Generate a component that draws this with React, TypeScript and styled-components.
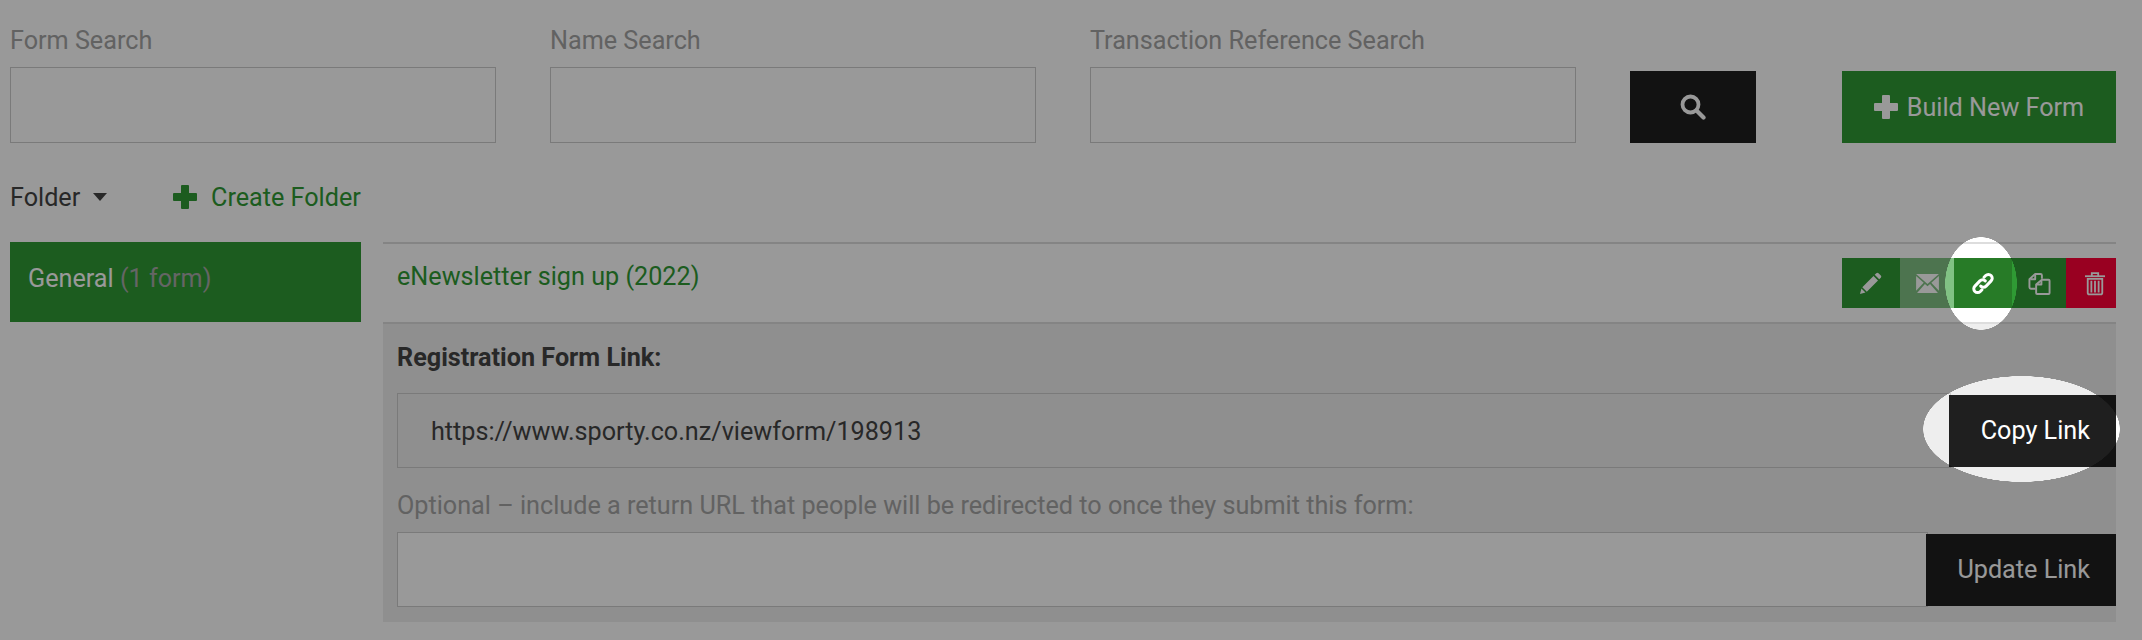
import styled, { createGlobalStyle } from 'styled-components';

const GlobalStyle = createGlobalStyle`
  html, body {
    margin: 0;
    background: #fff;
    font-family: Roboto, "Open Sans", sans-serif;
    font-size: 25.2px;
    color: #444;
  }
`;

const Page = styled.div`
  position: relative;
  width: 2142px;
  height: 640px;
  padding: 0 26px 0 10px;
  box-sizing: border-box;
  overflow: hidden;
`;

// dim layer with two elliptical holes round the highlighted controls
const Dimmer = styled.div`
  position: absolute;
  inset: 0;
  background: rgba(0, 0, 0, 0.4);
  mask-image:
    radial-gradient(ellipse 36px 46.5px at 1981px 283.5px, transparent 99%, #000 100%),
    radial-gradient(ellipse 98.5px 53px at 2021.5px 429px, transparent 99.5%, #000 100%);
  mask-composite: intersect;
`;

const SearchRow = styled.div`
  display: flex;
  align-items: flex-end;
  padding-top: 25px;
`;

const SearchField = styled.div`
  width: 486px;
  margin-right: 54px;
`;

const FieldLabel = styled.label`
  display: block;
  height: 42px;
  line-height: 31px;
  color: #a3a3a3;
`;

const TextBox = styled.div`
  height: 76px;
  box-sizing: border-box;
  border: 1px solid #ccc;
  background: #fff;
`;

const SearchButton = styled.button`
  width: 126px;
  height: 72px;
  margin: 0 86px 0 0;
  border: 0;
  padding: 0;
  background: #1f1f1f;
  color: #fff;
  display: flex;
  align-items: center;
  justify-content: center;
`;

const BuildButton = styled.button`
  width: 274px;
  height: 72px;
  border: 0;
  padding: 0;
  background: #2f9a34;
  color: #fff;
  font: 25.2px Roboto, sans-serif;
  display: flex;
  align-items: center;
  justify-content: center;
  gap: 9px;
`;

const FolderRow = styled.div`
  display: flex;
  align-items: center;
  height: 36px;
  margin-top: 36px;
`;

const FolderMenu = styled.div`
  width: 163px;
  display: flex;
  align-items: center;
  gap: 13px;
`;

const Caret = styled.span`
  width: 0;
  height: 0;
  border-left: 7px solid transparent;
  border-right: 7px solid transparent;
  border-top: 8px solid #444;
`;

const CreateFolder = styled.a`
  display: flex;
  align-items: center;
  gap: 14px;
  color: #2f9a34;
`;

const Body = styled.div`
  display: flex;
  gap: 22px;
  margin-top: 27px;
`;

const Sidebar = styled.div`
  width: 351px;
  height: 80px;
  flex: none;
  box-sizing: border-box;
  padding: 21px 18px 0;
  line-height: 32px;
  background: #2f9a34;
  color: #fff;
`;

const FormCount = styled.span`
  color: #a9a9a9;
`;

const Content = styled.div`
  flex: 1;
`;

const FormRow = styled.div`
  height: 82px;
  box-sizing: border-box;
  border-top: 2px solid #ddd;
  border-bottom: 2px solid #ddd;
  display: flex;
  justify-content: space-between;
  padding: 14px 0 0 14px;
`;

const FormName = styled.a`
  line-height: 30px;
  margin-top: 4px;
  color: #2f9a34;
`;

const Actions = styled.div`
  display: flex;
  height: 50px;
`;

const ActionButton = styled.button<{ $width: number; $bg: string; $faded?: boolean; $shift?: number }>`
  width: ${({ $width }) => $width}px;
  height: 50px;
  border: 0;
  padding: 0 0 0 ${({ $shift }) => $shift ?? 0}px;
  background: ${({ $bg }) => $bg};
  color: #fff;
  opacity: ${({ $faded }) => ($faded ? 0.6 : 1)};
  display: flex;
  align-items: center;
  justify-content: center;
`;

const LinkPanel = styled.div`
  height: 298px;
  box-sizing: border-box;
  padding: 18px 0 0 14px;
  background: #eee;
`;

const PanelHeading = styled.div`
  height: 33px;
  line-height: 32px;
  font-weight: 700;
`;

const OptionalLabel = styled.div`
  height: 34px;
  line-height: 34px;
  margin-top: 21px;
  margin-bottom: 9px;
  color: #a3a3a3;
`;

const InputGroup = styled.div`
  display: flex;
  align-items: center;
  margin-top: 18px;
`;

const OptionalGroup = styled(InputGroup)`
  margin-top: 0;
`;

const LinkBox = styled.div<{ $filled?: boolean }>`
  flex: 1;
  height: 75px;
  box-sizing: border-box;
  border: 1px solid #ccc;
  padding-left: 33px;
  line-height: 75px;
  background: ${({ $filled }) => ($filled ? '#eee' : '#fff')};
`;

const GroupButton = styled.button<{ $width: number }>`
  width: ${({ $width }) => $width}px;
  height: 72px;
  flex: none;
  margin-left: -2px;
  border: 0;
  padding: 0 26px 0 0;
  text-align: right;
  background: #1f1f1f;
  color: #fff;
  font: 25.2px Roboto, sans-serif;
`;

const Plus = ({ size, color }: { size: number; color: string }) => (
  <svg width={size} height={size} viewBox="0 0 24 24" fill={color}>
    <path d="M8 1a1 1 0 0 1 1-1h6a1 1 0 0 1 1 1v7h7a1 1 0 0 1 1 1v6a1 1 0 0 1-1 1h-7v7a1 1 0 0 1-1 1H9a1 1 0 0 1-1-1v-7H1a1 1 0 0 1-1-1V9a1 1 0 0 1 1-1h7z" />
  </svg>
);

const SearchIcon = () => (
  <svg width="26" height="26" viewBox="0 0 26 26" fill="none" stroke="#fff">
    <circle cx="10.500" cy="10.500" r="8" strokeWidth="3.800" />
    <path d="M16.500 16.500l7 7" strokeWidth="4.200" strokeLinecap="round" />
  </svg>
);

const PencilIcon = () => (
  <svg width="24" height="24" viewBox="0 0 24 24" fill="#fff">
    <path d="M17.300 2.200a1.600 1.600 0 0 1 2.200 0l2.300 2.300a1.600 1.600 0 0 1 0 2.200l-1.600 1.600-4.500-4.500zM14.500 5l4.500 4.500L7.800 20.700l-4.500-4.500zM2.400 17.500l4.100 4.100-5.500 1.400z" />
  </svg>
);

const MailIcon = () => (
  <svg width="23" height="19" viewBox="0 0 24 20" fill="#fff">
    <path d="M0 0h24L12 10.500zM0 2.200v15.300l8-8.300zM24 2.200v15.300l-8-8.300zM9.300 10.400L12 12.800l2.700-2.400L23 20H1z" />
  </svg>
);

const LinkIcon = () => (
  <svg width="24" height="25" viewBox="0 0 24 24" fill="none" stroke="#fff" strokeWidth="3" strokeLinecap="round">
    <path d="M9.700 14.600a3.800 3.800 0 0 0 5.400 0l5-5.200a3.800 3.800 0 0 0-5.400-5.400L13 5.700" />
    <path d="M14.300 9.400a3.800 3.800 0 0 0-5.400 0l-5 5.200a3.800 3.800 0 0 0 5.400 5.400l1.700-1.700" />
  </svg>
);

const CopyIcon = () => (
  <svg width="23" height="23" viewBox="0 0 24 24" fill="none" stroke="#fff" strokeWidth="2" strokeLinejoin="round">
    <path d="M8 17.500H3a1.500 1.500 0 0 1-1.500-1.500V7.500L7.500 2H13a1.500 1.500 0 0 1 1.500 1.500V7" />
    <path d="M14.500 8h7a1 1 0 0 1 1 1v13a1 1 0 0 1-1 1h-12a1 1 0 0 1-1-1v-9z" />
    <path d="M14 8.500V13H9" />
    <path d="M7.500 2.500V7.500H2.500" />
  </svg>
);

const TrashIcon = () => (
  <svg width="20" height="25" viewBox="0 0 22 26" fill="none" stroke="#fff" strokeWidth="2">
    <path d="M0 5h22" />
    <path d="M7.500 5V1.500h7V5" />
    <path d="M3 8v15.500a1.500 1.500 0 0 0 1.500 1.500h13a1.500 1.500 0 0 0 1.500-1.500V8z" />
    <path d="M7 10v13M11 10v13M15 10v13" />
  </svg>
);

const searches = ['Form Search', 'Name Search', 'Transaction Reference Search'];

export default function App() {
  return (
    <Page>
      <GlobalStyle />
      <SearchRow>
        {searches.map((label) => (
          <SearchField key={label}>
            <FieldLabel>{label}</FieldLabel>
            <TextBox />
          </SearchField>
        ))}
        <SearchButton>
          <SearchIcon />
        </SearchButton>
        <BuildButton>
          <Plus size={24} color="#fff" />
          Build New Form
        </BuildButton>
      </SearchRow>

      <FolderRow>
        <FolderMenu>
          Folder
          <Caret />
        </FolderMenu>
        <CreateFolder>
          <Plus size={24} color="#2f9a34" />
          Create Folder
        </CreateFolder>
      </FolderRow>

      <Body>
        <Sidebar>
          General <FormCount>(1 form)</FormCount>
        </Sidebar>
        <Content>
          <FormRow>
            <FormName>eNewsletter sign up (2022)</FormName>
            <Actions>
              <ActionButton $width={58} $bg="#2f9a34"><PencilIcon /></ActionButton>
              <ActionButton $width={54} $bg="#2f9a34" $faded><MailIcon /></ActionButton>
              <ActionButton $width={58} $bg="#277b27"><LinkIcon /></ActionButton>
              <ActionButton $width={54} $bg="#2f9a34"><CopyIcon /></ActionButton>
              <ActionButton $width={50} $bg="#ff0038" $shift={8}><TrashIcon /></ActionButton>
            </Actions>
          </FormRow>
          <LinkPanel>
            <PanelHeading>Registration Form Link:</PanelHeading>
            <InputGroup>
              <LinkBox $filled>https://www.sporty.co.nz/viewform/198913</LinkBox>
              <GroupButton $width={167}>Copy Link</GroupButton>
            </InputGroup>
            <OptionalLabel>Optional – include a return URL that people will be redirected to once they submit this form:</OptionalLabel>
            <OptionalGroup>
              <LinkBox />
              <GroupButton $width={190}>Update Link</GroupButton>
            </OptionalGroup>
          </LinkPanel>
        </Content>
      </Body>
      <Dimmer />
    </Page>
  );
}
